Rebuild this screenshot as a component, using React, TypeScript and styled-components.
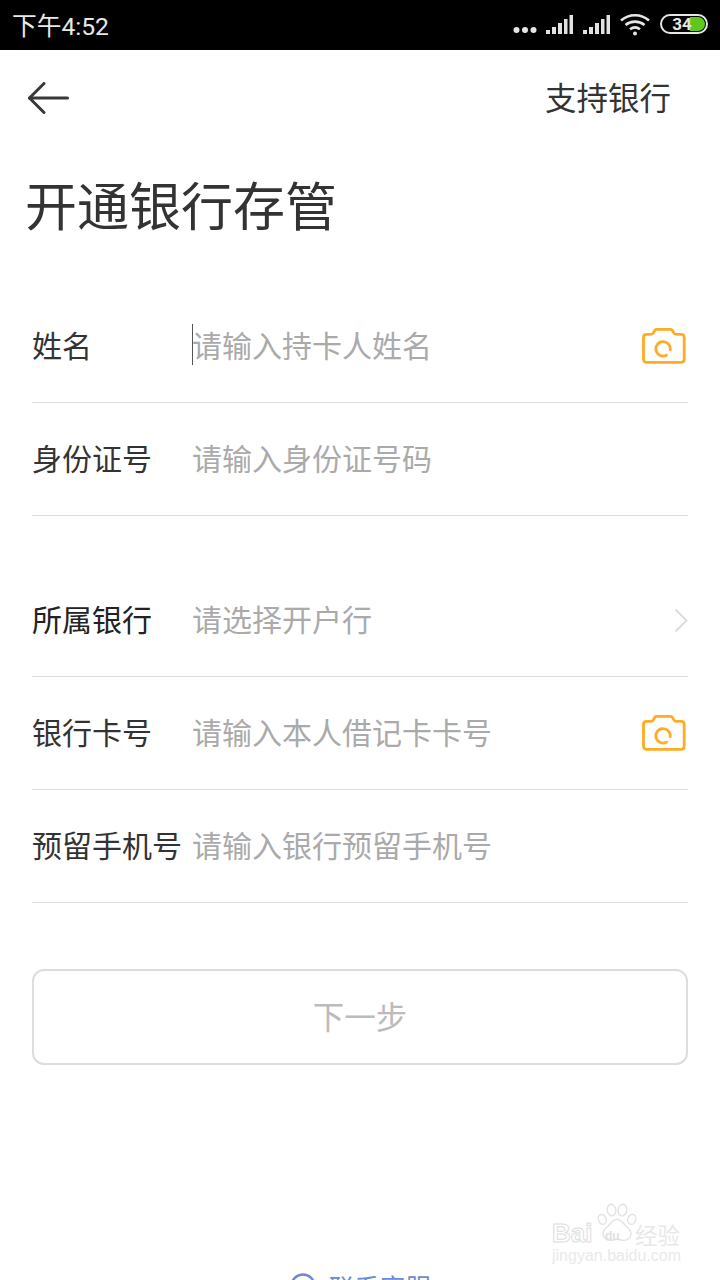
// Dépendances
import React from "react"
import styled, { createGlobalStyle } from "styled-components";

const cjk = `"Noto Sans CJK SC", "Noto Sans", sans-serif`;

const GlobalStyle = createGlobalStyle`
  html, body {
    margin: 0;
    padding: 0;
    background: #fff;
  }
  * { box-sizing: border-box; }
`;

// Styled Components
const Page = styled.div`
  position: relative;
  width: 720px;
  height: 1280px;
  overflow: hidden;
  background: #fff;
  font-family: ${cjk};
`;
const StatusBar = styled.div`
  height: 50px;
  background: #000;
  display: flex;
  align-items: center;
  justify-content: space-between;
  padding: 0 12px 0 12px;
`;
const Clock = styled.span`
  font-family: Roboto, ${cjk};
  font-size: 24.7px;
  color: #e8e8e8;
  line-height: 50px;
  margin-top: 4px;
`;
const StatusIcons = styled.div`
  display: flex;
  align-items: center;
  gap: 10px;
`;
const Battery = styled.div`
  position: relative;
  width: 48px;
  height: 20px;
  margin-top: -3px;
  border: 2px solid #e6e6e6;
  border-radius: 10px;
  overflow: hidden;
  display: flex;
  align-items: center;
  justify-content: center;
  font-family: Roboto, sans-serif;
  font-size: 17px;
  font-weight: 700;
  color: #e6e6e6;
`;
const BatteryFill = styled.div`
  position: absolute;
  top: 1px;
  right: 1px;
  bottom: 1px;
  width: 15px;
  background: #5fc91a;
  border-radius: 0 8px 8px 0;
`;
const BatteryLabel = styled.span`
  position: relative;
  line-height: 16px;
  margin-right: 4px;
`;
const NavBar = styled.div`
  height: 96px;
  display: flex;
  align-items: center;
  justify-content: space-between;
  padding: 0 49px 0 28px;
`;
const NavLink = styled.span`
  font-size: 31.5px;
  color: #333;
  margin-bottom: 4px;
`;
const Title = styled.h1`
  margin: 0;
  padding-left: 25px;
  height: 144px;
  padding-top: 22px;
  font-size: 52px;
  font-weight: 400;
  line-height: 72px;
  color: #333;
`;
const Group = styled.div<{ $gap?: number }>`
  margin: 0 32px ${(props) => props.$gap || 0}px;
`;
const Row = styled.div`
  height: 113px;
  display: flex;
  align-items: center;
  border-bottom: 1px solid #ddd;
`;
const Label = styled.span<{ $dark?: boolean }>`
  width: 160px;
  flex-shrink: 0;
  margin-bottom: 4px;
  font-size: 30px;
  color: ${(props) => (props.$dark ? "#222" : "#333")};
  white-space: nowrap;
`;
const Placeholder = styled.span`
  position: relative;
  flex: 1;
  margin-bottom: 4px;
  font-size: 30px;
  color: #aaa;
  white-space: nowrap;
`;
const Caret = styled.i`
  position: absolute;
  left: 0;
  top: 2px;
  width: 1px;
  height: 41px;
  background: #555;
`;
const SubmitButton = styled.button`
  display: block;
  width: 656px;
  height: 96px;
  margin: 66px 32px 0;
  padding: 0 0 4px;
  background: #fff;
  border: 2px solid #ddd;
  border-radius: 12px;
  font-family: ${cjk};
  font-size: 31.5px;
  color: #bbb;
`;
const Contact = styled.div`
  position: absolute;
  left: 290px;
  top: 1266px;
  display: flex;
  align-items: center;
  gap: 13px;
  font-size: 25.5px;
  line-height: 40px;
  color: #6d8bd0;
`;
const Watermark = styled.div`
  position: absolute;
  left: 552px;
  top: 1202px;
  width: 130px;
  height: 64px;
  color: #e6e6e6;
`;
const WatermarkBrand = styled.div`
  position: absolute;
  left: 0;
  top: 16px;
  font-family: "Liberation Sans", sans-serif;
  font-size: 26px;
  font-weight: 700;
  line-height: 30px;
  color: transparent;
  -webkit-text-stroke: 1px #dedede;
`;
const WatermarkCn = styled.span`
  position: absolute;
  left: 83px;
  top: 17px;
  font-family: ${cjk};
  font-size: 22.5px;
  line-height: 30px;
  white-space: nowrap;
  color: #e8e8e8;
`;
const WatermarkDu = styled.span`
  position: absolute;
  left: 53px;
  top: 27px;
  font-family: "Liberation Sans", sans-serif;
  font-size: 12px;
  font-weight: 700;
  line-height: 14px;
  color: #e0e0e0;
`;
const WatermarkUrl = styled.span`
  position: absolute;
  left: 0;
  top: 45px;
  font-family: "Liberation Sans", sans-serif;
  font-size: 16px;
  line-height: 18px;
  white-space: nowrap;
  color: #eaeaea;
`;

function Dots() {
  return (
    <svg width="24" height="8" viewBox="0 0 24 8" fill="#e6e6e6" style={{ marginTop: 10, marginRight: -1, marginLeft: -1 }}>
      <circle cx="3.5" cy="4" r="3" />
      <circle cx="12" cy="4" r="3" />
      <circle cx="20.5" cy="4" r="3" />
    </svg>
  );
}

function Signal() {
  return (
    <svg width="27" height="20" viewBox="0 0 27 20" fill="#e2e2e2" style={{ marginTop: -3 }}>
      <rect x="0" y="16" width="4" height="4" />
      <rect x="6" y="13" width="4" height="7" />
      <rect x="12" y="9" width="4" height="11" />
      <rect x="18" y="5" width="3.5" height="15" />
      <rect x="23.5" y="1" width="3.5" height="19" />
    </svg>
  );
}

function Wifi() {
  return (
    <svg width="30" height="24" viewBox="0 0 30 24" fill="none" stroke="#e6e6e6" strokeWidth="2.6">
      <path d="M1 7.5C9 .5 21 .5 29 7.5" />
      <path d="M5.5 12C11 7.5 19 7.5 24.5 12" />
      <path d="M10 16.2c3-2.2 7-2.2 10 0" />
      <circle cx="15" cy="20.5" r="2" fill="#e6e6e6" stroke="none" />
    </svg>
  );
}

function BackArrow() {
  return (
    <svg width="41" height="32" viewBox="0 0 41 32" fill="none" stroke="#383838" strokeWidth="3" strokeLinecap="round" strokeLinejoin="round">
      <path d="M1.5 16H39.5" />
      <path d="M16 1.5L1.5 16L16 30.5" />
    </svg>
  );
}

function CameraIcon() {
  return (
    <svg width="44" height="36" viewBox="0 0 44 36" fill="none" stroke="#ffab24" strokeWidth="2.8" strokeLinecap="round" strokeLinejoin="round" style={{ marginRight: 2, marginBottom: 1 }}>
      <path d="M4.5 6.3H9c1.4 0 2-.5 2.6-1.6l1-2c.5-1 1.2-1.4 2.3-1.4h13.4c1.1 0 1.8.4 2.3 1.4l1 2c.6 1.1 1.2 1.6 2.6 1.6h5c1.8 0 3 1.2 3 3v22c0 1.8-1.2 3-3 3H4.5c-1.8 0-3-1.2-3-3v-22c0-1.8 1.2-3 3-3Z" />
      <path d="M24.500 27.200A7.200 7.200 0 1 1 28.200 21.800" />
    </svg>
  );
}

function Chevron() {
  return (
    <svg width="14" height="25" viewBox="0 0 14 25" fill="none" stroke="#dcdcdc" strokeWidth="2">
      <path d="M1.500 1.500L12.500 12.500L1.500 23.500" />
    </svg>
  );
}

function Paw() {
  return (
    <svg width="42" height="41" viewBox="0 0 54 50" fill="#fff" stroke="#e2e2e2" strokeWidth="1.800" style={{ position: "absolute", left: 44, top: 0 }}>
      <ellipse cx="8" cy="21" rx="5" ry="6.500" transform="rotate(-25 8 21)" />
      <ellipse cx="20" cy="9" rx="5.500" ry="7.500" transform="rotate(-8 20 9)" />
      <ellipse cx="34" cy="9" rx="5.500" ry="7.500" transform="rotate(8 34 9)" />
      <ellipse cx="46" cy="21" rx="5" ry="6.500" transform="rotate(25 46 21)" />
      <path d="M27 21c-5 0-7 4-10.500 7.500C13 32 9 34.500 9 39c0 5 4 9 9 9 3.500 0 6-1.500 9-1.500s5.500 1.500 9 1.500c5 0 9-4 9-9 0-4.500-4-7-7.500-10.500C34 25 32 21 27 21Z" />
    </svg>
  );
}

function App() {
  return (
    <React.Fragment>
      <GlobalStyle />
      <Page>
        <StatusBar>
          <Clock>下午4:52</Clock>
          <StatusIcons>
            <Dots />
            <Signal />
            <Signal />
            <Wifi />
            <Battery>
              <BatteryFill />
              <BatteryLabel>34</BatteryLabel>
            </Battery>
          </StatusIcons>
        </StatusBar>

        <NavBar>
          <BackArrow />
          <NavLink>支持银行</NavLink>
        </NavBar>

        <Title>开通银行存管</Title>

        {/* Identité */}
        <Group $gap={48}>
          <Row>
            <Label>姓名</Label>
            <Placeholder><Caret />请输入持卡人姓名</Placeholder>
            <CameraIcon />
          </Row>
          <Row>
            <Label>身份证号</Label>
            <Placeholder>请输入身份证号码</Placeholder>
          </Row>
        </Group>

        {/* Banque */}
        <Group>
          <Row>
            <Label $dark>所属银行</Label>
            <Placeholder>请选择开户行</Placeholder>
            <Chevron />
          </Row>
          <Row>
            <Label>银行卡号</Label>
            <Placeholder>请输入本人借记卡卡号</Placeholder>
            <CameraIcon />
          </Row>
          <Row>
            <Label>预留手机号</Label>
            <Placeholder>请输入银行预留手机号</Placeholder>
          </Row>
        </Group>

        <SubmitButton type="button">下一步</SubmitButton>

        <Contact>
          <svg width="26" height="26" viewBox="0 0 26 26" fill="none" stroke="#6d8bd0" strokeWidth="2.500">
            <circle cx="13" cy="13" r="11.500" />
          </svg>
          联系客服
        </Contact>

        <Watermark>
          <WatermarkBrand>Bai</WatermarkBrand>
          <Paw />
          <WatermarkDu>du</WatermarkDu>
          <WatermarkCn>经验</WatermarkCn>
          <WatermarkUrl>jingyan.baidu.com</WatermarkUrl>
        </Watermark>
      </Page>
    </React.Fragment>
  )
}

export default App
